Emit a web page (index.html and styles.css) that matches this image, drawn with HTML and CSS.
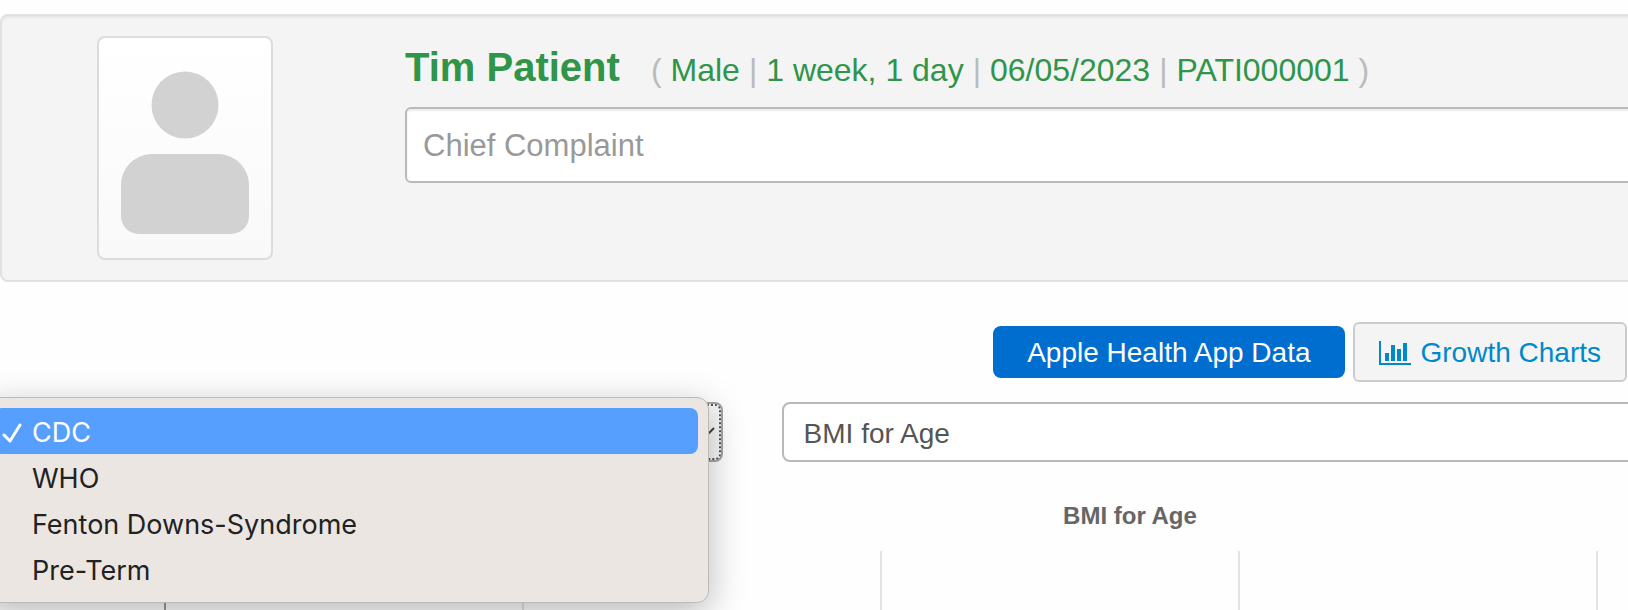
FILE: index.html
```
<!DOCTYPE html>
<html lang="en">

<head>
    <meta charset="UTF-8">
    <meta name="viewport" content="width=device-width, initial-scale=1.0">
    <title>Growth Charts - Tim Patient</title>
    <link rel="stylesheet" href="styles.css">
</head>

<body>
    <header class="patient">
        <div class="photo">
            <svg viewBox="0 0 172 220" role="img" aria-label="Patient photo">
                <circle cx="86" cy="67" r="33.5" />
                <path d="M52 116h68a31 31 0 0 1 30 31v30a18 18 0 0 1-18 19H40a18 18 0 0 1-18-19v-30a31 31 0 0 1 30-31z" />
            </svg>
        </div>
        <div class="info">
            <div class="name-line">
                <h1>Tim Patient</h1>
                <p class="details">
                    <i>(</i><span>Male</span><i>|</i><span>1 week, 1 day</span><i>|</i><span>06/05/2023</span><i>|</i><span>PATI000001</span><i>)</i>
                </p>
            </div>
            <input type="text" class="complaint" placeholder="Chief Complaint" aria-label="Chief Complaint">
        </div>
    </header>

    <div class="actions">
        <button type="button" class="btn-primary">Apple Health App Data</button>
        <button type="button" class="btn-default">
            <svg class="chart-icon" viewBox="0 0 32 24" aria-hidden="true">
                <path d="M0 0h2v22h30v2H0zM6 12h4v8H6zM12 4h4v16h-4zM18 8h4v12h-4zM24 2h4v18h-4z" />
            </svg>
            Growth Charts
        </button>
    </div>

    <div class="filters">
        <div class="source">
            <select class="focused" aria-label="Chart source">
                <option selected>CDC</option>
                <option>WHO</option>
                <option>Fenton Downs-Syndrome</option>
                <option>Pre-Term</option>
            </select>
            <svg class="arrow" viewBox="0 0 16 10" aria-hidden="true">
                <path d="M1 1l7 7 7-7" />
            </svg>
            <ul class="menu" role="listbox" aria-label="Chart source">
                <li class="active" role="option" aria-selected="true">
                    <svg class="check" viewBox="0 0 20 20" aria-hidden="true">
                        <path d="M2 12l6 6L18 2" />
                    </svg>
                    CDC
                </li>
                <li role="option">WHO</li>
                <li role="option">Fenton Downs-Syndrome</li>
                <li role="option">Pre-Term</li>
            </ul>
        </div>
        <select aria-label="Chart type">
            <option>BMI for Age</option>
        </select>
    </div>

    <section class="chart">
        <h2>BMI for Age</h2>
        <div class="plot">
            <div></div>
            <div></div>
            <div></div>
            <div></div>
            <div></div>
        </div>
    </section>
</body>

</html>
```

FILE: styles.css
```
* {
    box-sizing: border-box;
}

body {
    margin: 0;
    padding-top: 14px;
    min-height: 100vh;
    display: flex;
    flex-direction: column;
    overflow: hidden;
    font-family: "Helvetica Neue", "Liberation Sans", Arial, sans-serif;
    font-size: 28px;
    color: #555;
    background: #fefefe;
}

/* patient banner */
.patient {
    display: flex;
    gap: 132px;
    margin-right: -40px;
    padding: 20px 20px 20px 95px;
    border: 2px solid #e1e1e1;
    border-radius: 8px;
    background: #f4f4f4;
    box-shadow: inset 0 2px 2px rgba(0, 0, 0, 0.05);
}

.photo {
    width: 176px;
    height: 224px;
    border: 2px solid #dcdcdc;
    border-radius: 8px;
    background: linear-gradient(#fff, #f9f9f9);
}

.photo svg {
    display: block;
    fill: #d2d2d2;
}

.info {
    flex: 1;
}

.name-line {
    display: flex;
    align-items: baseline;
    gap: 31px;
    height: 62px;
    margin-bottom: 9px;
    line-height: 62px;
    color: #2f9549;
}

.name-line h1 {
    margin: 0;
    font-size: 40px;
}

.details {
    display: flex;
    gap: 9px;
    margin: 0;
    font-size: 32px;
}

.details i {
    font-style: normal;
    color: #bbb;
}

.complaint {
    display: block;
    width: 100%;
    height: 76px;
    padding: 2px 16px 0;
    border: 2px solid #b9b9b9;
    border-radius: 6px;
    background: #fff;
    box-shadow: inset 0 2px 2px rgba(0, 0, 0, 0.08);
    font-family: inherit;
    font-size: 31px;
    color: #555;
}

.complaint::placeholder {
    color: #999;
}

/* buttons */
.actions {
    display: flex;
    justify-content: flex-end;
    align-items: center;
    gap: 8px;
    margin-top: 40px;
    padding-right: 1px;
}

.actions button {
    font-family: inherit;
    font-size: 28px;
    cursor: pointer;
}

.btn-primary {
    height: 52px;
    padding: 2px 34px 0;
    border: none;
    border-radius: 8px;
    background: #006ecf;
    color: #fff;
}

.btn-default {
    display: flex;
    align-items: center;
    gap: 10px;
    height: 60px;
    padding: 2px 24px 0;
    border: 2px solid #ccc;
    border-radius: 6px;
    background: #f4f4f4;
    color: #0088cc;
}

.chart-icon {
    width: 32px;
    height: 24px;
    fill: #0088cc;
}

/* dropdowns */
.filters {
    display: grid;
    grid-template-columns: 35fr 41fr;
    gap: 59px;
    margin: 20px -20px 0 -17px;
}

.source {
    position: relative;
}

select {
    display: block;
    width: 100%;
    height: 60px;
    padding: 2px 20px 0;
    border: 2px solid #b9b9b9;
    border-radius: 8px;
    appearance: none;
    background: #fff;
    font-family: inherit;
    font-size: 28px;
    color: #555;
}

select.focused {
    border-color: #a5a5a5;
    background: #f9f9f9;
    outline: 2px dotted #555;
    outline-offset: -4px;
}

.arrow {
    position: absolute;
    top: 25px;
    right: 8px;
    width: 16px;
    height: 10px;
    fill: none;
    stroke: #444;
    stroke-width: 2;
}

.menu {
    position: absolute;
    top: -5px;
    left: 0;
    right: 14px;
    margin: 0;
    padding: 10px;
    border: 1px solid #bbb;
    border-radius: 12px;
    background: #ebe6e2;
    box-shadow: 0 10px 36px rgba(0, 0, 0, 0.28);
    list-style: none;
    font-family: Inter, sans-serif;
    font-size: 27px;
    color: #222;
}

.menu li {
    position: relative;
    height: 46px;
    padding-left: 38px;
    border-radius: 8px;
    line-height: 49px;
}

.menu .active {
    background: #579fff;
    color: #fff;
}

.check {
    position: absolute;
    top: 15px;
    left: 8px;
    width: 20px;
    height: 20px;
    fill: none;
    stroke: #fff;
    stroke-width: 3;
    stroke-linecap: round;
    stroke-linejoin: round;
}

/* chart */
.chart {
    flex: 1;
    display: flex;
    flex-direction: column;
    margin-right: -632px;
}

.chart h2 {
    margin: 39px 0 20px;
    font-size: 24px;
    line-height: 30px;
    text-align: center;
    color: #666;
}

.plot {
    flex: 1;
    display: grid;
    grid-template-columns: repeat(5, 358px);
    padding-left: 164px;
}

.plot div {
    border-left: 2px solid #e3e3e3;
}

.plot div:first-child {
    border-color: #999;
}
```
